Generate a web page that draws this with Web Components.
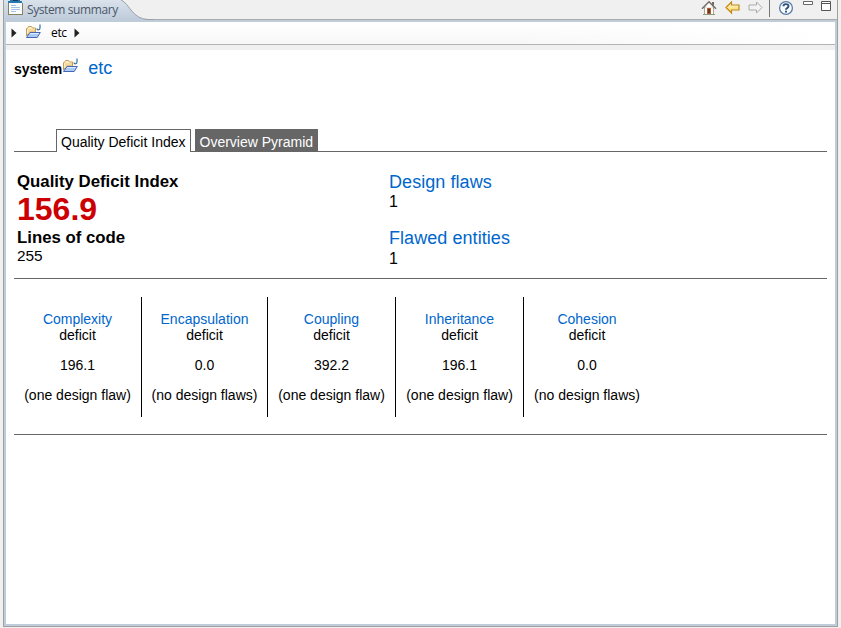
<!DOCTYPE html>
<html lang="en"><head><meta charset="utf-8"><title>System summary</title>
<style>
html,body{margin:0;height:100%;overflow:hidden;background:#f0f0f0}
</style></head><body>
<summary-view></summary-view>
<script>
const icons = {
view:`<svg width="16" height="16" viewBox="0 0 16 16" shape-rendering="crispEdges"><path fill="#2878ad" d="M2 0h10v1h2v2H0V1h2z"/><path fill="#173d68" d="M5 0h5v1H5z"/><path fill="#8a8058" d="M0 3h15v12H0z"/><path fill="#f8fbff" d="M1 3h13v11H1z"/><path fill="#a5c2e2" d="M3 5h5v1H3zM3 7h9v1H3zM3 9h9v1H3zM3 11h5v1H3z"/></svg>`,
folder:`<svg width="16" height="16" viewBox="0 0 16 16"><path fill="#fff0c7" stroke="#c59b55" d="M1.5 12V4.5h1l1-2h3l1 1.5h3v4h-6z"/><path fill="#f6d999" d="M3 5h7v2H5l-2 4z"/><path fill="#a9cbf5" stroke="#4765b0" d="M1.5 13.5L5 8.5h10.3l-3.1 5z"/><path fill="#e0efff" d="M5.5 9h8.6l-.6 1H4.8z"/><path fill="none" stroke="#34729f" stroke-width="1.2" d="M15 .5V4q0 1.8-1.7 1.8Q12 5.8 12 4.5"/></svg>`,
arrow:`<svg width="6" height="10" viewBox="0 0 6 10"><path fill="#222" d="M.5.5v9L5.5 5z"/></svg>`,
home:`<svg width="16" height="16" viewBox="0 0 16 16"><path fill="#746b64" d="M11 2h2v4h-2z"/><path fill="#fffdf5" stroke="#aaa598" d="M3.5 7h9v7.5h-9z"/><path fill="none" stroke="#777069" stroke-width="1.6" d="M1 8.7L8 1.8l7 6.9"/><path fill="#fff" d="M8 3.5l4 4H4z"/><path fill="#ba5a34" d="M6 8h4v6H6z"/><path fill="#663622" d="M7 9h2v4H7z"/><path stroke="#8b9b7d" d="M2 14.5h12"/></svg>`,
back:`<svg width="16" height="14" viewBox="0 0 16 14"><defs><linearGradient id="g" x2="0" y2="1"><stop stop-color="#fffbe5"/><stop offset="1" stop-color="#ffd452"/></linearGradient></defs><path fill="url(#g)" stroke="#c08a16" stroke-width="1.2" d="M1 6.5L6.5 1v3H14v5H6.5v3z"/></svg>`,
forward:`<svg width="16" height="14" viewBox="0 0 16 14"><path fill="#f3f3f3" stroke="#aaa" d="M14 6.5L8.5 1v3H1v5h7.5v3z"/></svg>`,
help:`<svg width="16" height="16" viewBox="0 0 16 16"><circle cx="8" cy="8" r="6.4" fill="#f8fbff" stroke="#587ca5" stroke-width="1.3"/><path fill="none" stroke="#304f75" stroke-width="1.9" d="M5.5 6.3q0-2.2 2.5-2.2t2.5 2q0 1.3-1.4 2Q8 8.7 8 9.8"/><path fill="#304f75" d="M7 10.8h2v1.7H7z"/></svg>`,
min:`<svg width="10" height="4" viewBox="0 0 10 4"><path fill="#fff" stroke="#686868" d="M.5.5h9v3h-9z"/></svg>`,
max:`<svg width="10" height="10" viewBox="0 0 10 10"><path fill="#fff" stroke="#555" d="M.5.5h9v9h-9zM0 2.5h10"/></svg>`};
function define(name, html) {
  customElements.define(name, class extends HTMLElement {
    connectedCallback() {
      if (this.shadowRoot) return;
      this.attachShadow({mode:'open'}).innerHTML = typeof html === 'function' ? html(this) : html;
    }
  });
}
define('ui-icon', e => `<style>:host{display:block;flex:none;line-height:0}svg{display:block}</style>${icons[e.getAttribute('name')]}`);
define('view-header', `<style>
:host{display:flex;height:20px;position:relative;background:linear-gradient(#aaa,#aaa) 0 100%/100% 1px no-repeat #f0f0f0;box-sizing:border-box}
.tab{position:absolute;left:0;top:0;display:block}
.title{position:relative;margin:0 0 0 3px;width:105px;font:12px/19px "Open Sans",sans-serif;letter-spacing:-.4px;color:#4a5668;white-space:nowrap}
ui-icon{position:relative}.view{margin-left:4px}
.tools{margin-left:auto;display:flex}
.home{margin:0 8px 0 0}.back{margin:1px 7px 0 0}.forward{margin:1px 5px 0 0}.sep{width:1px;height:17px;background:#777;margin-right:8px}.help{margin-right:9px}.min{margin:1px 8px 0 0}.max{margin:1px 6px 0 0}
</style><svg class="tab" width="150" height="20"><defs><linearGradient id="t" x2="0" y2="1"><stop stop-color="#dae2eb"/><stop offset="1" stop-color="#becbda"/></linearGradient></defs><path fill="url(#t)" d="M0 0H117C126 4 128 19 144 19.5V20H0z"/><path fill="none" stroke="#98a0a8" d="M117 0C126 4 128 19 144 19.5H150"/></svg>
<ui-icon class="view" name="view"></ui-icon><span class="title">System summary</span><div class="tools"><ui-icon class="home" name="home"></ui-icon><ui-icon class="back" name="back"></ui-icon><ui-icon class="forward" name="forward"></ui-icon><div class="sep"></div><ui-icon class="help" name="help"></ui-icon><ui-icon class="min" name="min"></ui-icon><ui-icon class="max" name="max"></ui-icon></div>`);
define('bread-crumb', `<style>:host{display:flex;height:22px;background:linear-gradient(90deg,#fff0 60%,#fff),linear-gradient(#fff,#f7f7f7);border-bottom:1px solid #b4b4b4;font:12px/22px "Open Sans",sans-serif;color:#000;letter-spacing:-.35px}
.a{margin:6px 8px 0 5px}.f{margin:2px 10px 0 0}.b{margin:6px 0 0 7px}</style><ui-icon class="a" name="arrow"></ui-icon><ui-icon class="f" name="folder"></ui-icon><span>etc</span><ui-icon class="b" name="arrow"></ui-icon>`);
define('entity-heading', `<style>:host{display:flex;height:79px;font:14px/20px "Liberation Sans",Arial,sans-serif}b{margin-top:9px}ui-icon{margin:8px 10px 0 0}a{font-size:18px;margin-top:8px;color:#06c}</style><b>system</b><ui-icon name="folder"></ui-icon><a><slot></slot></a>`);
define('tab-strip', `<style>:host{display:flex;height:23px;font:14px/25px "Liberation Sans",Arial,sans-serif;background:linear-gradient(#666,#666) 0 100%/100% 1px no-repeat}
.on{box-sizing:border-box;margin-left:42px;width:135px;height:23px;border:1px solid #666;border-bottom:0;background:#fff;padding-left:4px;white-space:nowrap}.off{margin-left:4px;width:123px;box-sizing:border-box;padding-left:4.5px;background:#666;color:#fff;white-space:nowrap;line-height:26px}</style><div class="on">Quality Deficit Index</div><div class="off">Overview Pyramid</div>`);
define('quality-totals', `<style>:host{display:grid;grid-template-columns:372px 1fr;height:126px;padding-left:3px;border-bottom:1px solid #666;box-sizing:content-box;font-family:"Liberation Sans",Arial,sans-serif}
div{padding-top:20px}b,strong,span,a{display:block}b{font-size:16.8px;line-height:20px}strong{font-size:32px;line-height:34px;padding-bottom:2px;color:#c00}span{font-size:15.4px;line-height:16px}.r a{font-size:18px;line-height:20px;letter-spacing:.06px;color:#06c}.r span{font-size:16px;line-height:19px;margin-bottom:17px}.r span:last-child{line-height:21px;margin:0}</style>
<div><b>Quality Deficit Index</b><strong>156.9</strong><b>Lines of code</b><span>255</span></div><div class="r"><a>Design flaws</a><span>1</span><a>Flawed entities</a><span>1</span></div>`);
define('deficit-card', e => `<style>:host{display:block;box-sizing:border-box;height:120px;padding-top:14px;text-align:center;font:14px/16px "Liberation Sans",Arial,sans-serif;white-space:nowrap;border-right:1px solid #000}:host(:last-child){border-right:0}a,span{display:block}a{color:#06c}.v{margin:14px 0}</style><a>${e.getAttribute('label')}</a><span>deficit</span><span class="v">${e.getAttribute('value')}</span><span><slot></slot></span>`);
define('deficit-row', `<style>:host{display:grid;grid-template-columns:128px 126px 128px 128px 126px;padding:18px 0 17px;border-bottom:1px solid #666}</style>
<deficit-card label="Complexity" value="196.1">(one design flaw)</deficit-card><deficit-card label="Encapsulation" value="0.0">(no design flaws)</deficit-card><deficit-card label="Coupling" value="392.2">(one design flaw)</deficit-card><deficit-card label="Inheritance" value="196.1">(one design flaw)</deficit-card><deficit-card label="Cohesion" value="0.0">(no design flaws)</deficit-card>`);
define('summary-view', `<style>:host{display:block;box-sizing:border-box;width:835px;height:627px;margin-left:3px;border:1px solid #a0a0a0;border-top:0}
.frame{box-sizing:border-box;height:606px;border:2px solid #bfcddb;background:#fff}
.band{height:5px;background:#f0f0f0}main{padding:0 8px}</style><view-header></view-header><div class="frame"><bread-crumb></bread-crumb><div class="band"></div><main><entity-heading>etc</entity-heading><tab-strip></tab-strip><quality-totals></quality-totals><deficit-row></deficit-row></main></div>`);
</script></body></html>
